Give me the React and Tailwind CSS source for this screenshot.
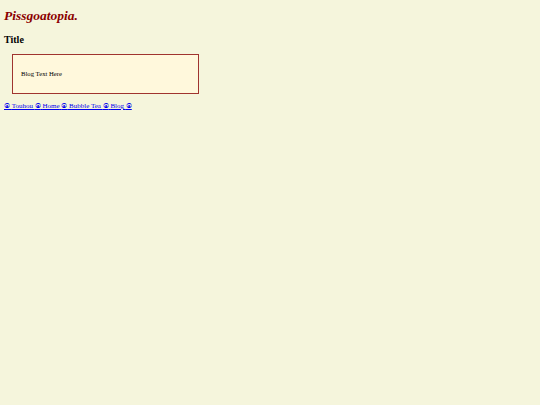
function Dot() {
  return (
    <span className="text-[6px]" style={{ fontFamily: '"DejaVu Sans", sans-serif' }}>⦿</span>
  );
}

export default function App() {
  return (
    <div className="min-h-[405px] w-full bg-[#f5f5dc] px-[4px] pt-[8px] text-black" style={{ fontFamily: '"Liberation Serif", serif' }}>
      <h1 className="text-[13.5px] font-bold italic leading-[16px] text-[#8b0000]">Pissgoatopia.</h1>
      <h2 className="mt-[10px] text-[10px] font-bold leading-[12px]">Title</h2>
      <div className="ml-[8px] mt-[8px] flex h-[40px] w-[187px] items-center border-[1.5px] border-[#a0342f] bg-[#fff8dc] pl-[8px]">
        <p className="text-[6.7px]">Blog Text Here</p>
      </div>
      <div className="mt-[7px] text-[7px] leading-[9px] text-[#0000ee] underline">
        <Dot /> <a href="#" className="text-[#0000ee]">Touhou</a> <Dot /> <a href="#" className="text-[#0000ee]">Home</a> <Dot /> <a href="#" className="text-[#0000ee]">Bubble Tea</a> <Dot /> <a href="#" className="text-[#0000ee]">Blog</a> <Dot />
      </div>
    </div>
  );
}
